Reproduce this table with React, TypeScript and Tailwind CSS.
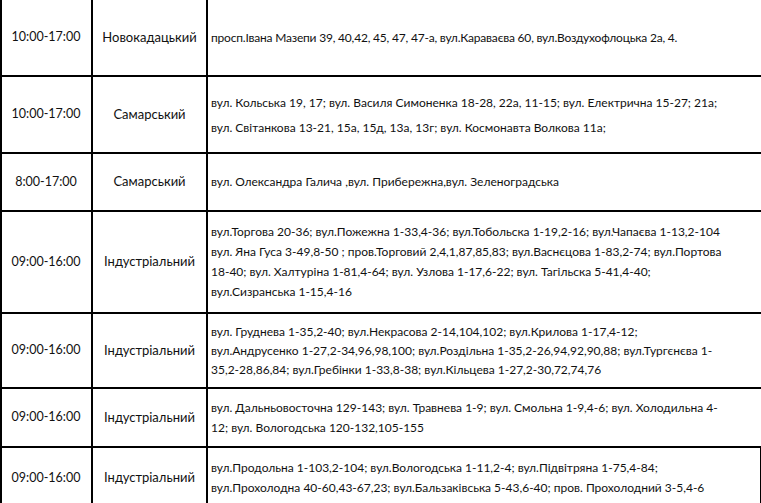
import React from 'react';

type Row = {
  time: string;
  district: string;
  lines: string[];
  h: string;
  lh: string;
  tight?: boolean;
  last?: boolean;
};

const ROWS: Row[] = [
  {
    time: '10:00-17:00',
    district: 'Новокадацький',
    lines: ['просп.Івана Мазепи 39, 40,42, 45, 47, 47-а, вул.Караваєва 60, вул.Воздухофлоцька 2а, 4.'],
    h: 'h-[77px]',
    lh: 'leading-[20px]',
    tight: true,
  },
  {
    time: '10:00-17:00',
    district: 'Самарський',
    lines: [
      'вул. Кольська 19, 17; вул. Василя Симоненка 18-28, 22а, 11-15; вул. Електрична 15-27; 21а;',
      'вул. Світанкова 13-21, 15а, 15д, 13а, 13г; вул. Космонавта Волкова 11а;',
    ],
    h: 'h-[77px]',
    lh: 'leading-[25px]',
  },
  {
    time: '8:00-17:00',
    district: 'Самарський',
    lines: ['вул. Олександра Галича ,вул. Прибережна,вул. Зеленоградська'],
    h: 'h-[58px]',
    lh: 'leading-[20px]',
  },
  {
    time: '09:00-16:00',
    district: 'Індустріальний',
    lines: [
      'вул.Торгова 20-36; вул.Пожежна 1-33,4-36; вул.Тобольска 1-19,2-16; вул.Чапаєва 1-13,2-104',
      'вул. Яна Гуса 3-49,8-50 ; пров.Торговий 2,4,1,87,85,83; вул.Васнєцова 1-83,2-74; вул.Портова',
      '18-40; вул. Халтуріна 1-81,4-64; вул. Узлова 1-17,6-22; вул. Тагільска 5-41,4-40;',
      'вул.Сизранська 1-15,4-16',
    ],
    h: 'h-[102px]',
    lh: 'leading-[20px]',
  },
  {
    time: '09:00-16:00',
    district: 'Індустріальний',
    lines: [
      'вул. Груднева 1-35,2-40; вул.Некрасова 2-14,104,102; вул.Крилова 1-17,4-12;',
      'вул.Андрусенко 1-27,2-34,96,98,100; вул.Роздільна 1-35,2-26,94,92,90,88; вул.Тургєнєва 1-',
      '35,2-28,86,84; вул.Гребінки 1-33,8-38; вул.Кільцева 1-27,2-30,72,74,76',
    ],
    h: 'h-[75px]',
    lh: 'leading-[19px]',
  },
  {
    time: '09:00-16:00',
    district: 'Індустріальний',
    lines: [
      'вул. Дальньовосточна 129-143; вул. Травнева 1-9; вул. Смольна 1-9,4-6; вул. Холодильна 4-',
      '12; вул. Вологодська 120-132,105-155',
    ],
    h: 'h-[59px]',
    lh: 'leading-[20px]',
  },
  {
    time: '09:00-16:00',
    district: 'Індустріальний',
    lines: [
      'вул.Продольна 1-103,2-104; вул.Вологодська 1-11,2-4; вул.Підвітряна 1-75,4-84;',
      'вул.Прохолодна 40-60,43-67,23; вул.Бальзаківська 5-43,6-40; пров. Прохолодний 3-5,4-6',
    ],
    h: 'h-[60px]',
    lh: 'leading-[20px]',
    last: true,
  },
];

const App: React.FC = () => {
  return (
    <div className="w-[761px] h-[503px] overflow-hidden bg-white text-[#111] font-['Lato','Noto_Sans',sans-serif]">
      {ROWS.map((r, i) => (
        <div key={i} className={`flex ${r.h} ${r.last ? '' : 'border-b-2 border-black'}`}>
          <div className="w-[93px] shrink-0 border-l-2 border-r-2 border-black flex items-center justify-center pr-[1px] text-[12.5px]">
            {r.time}
          </div>
          <div className="w-[115px] shrink-0 border-r-2 border-black flex items-center justify-center text-[13px]">
            {r.district}
          </div>
          <div
            className={`flex-1 flex flex-col justify-center pl-[3px] text-[12px] ${r.lh} ${
              r.tight ? 'tracking-[-0.2px]' : ''
            } ${r.last ? 'border-r border-black' : ''}`}
          >
            {r.lines.map((l, j) => (
              <div key={j} className="whitespace-nowrap">{l}</div>
            ))}
          </div>
        </div>
      ))}
    </div>
  );
};

export default App;
